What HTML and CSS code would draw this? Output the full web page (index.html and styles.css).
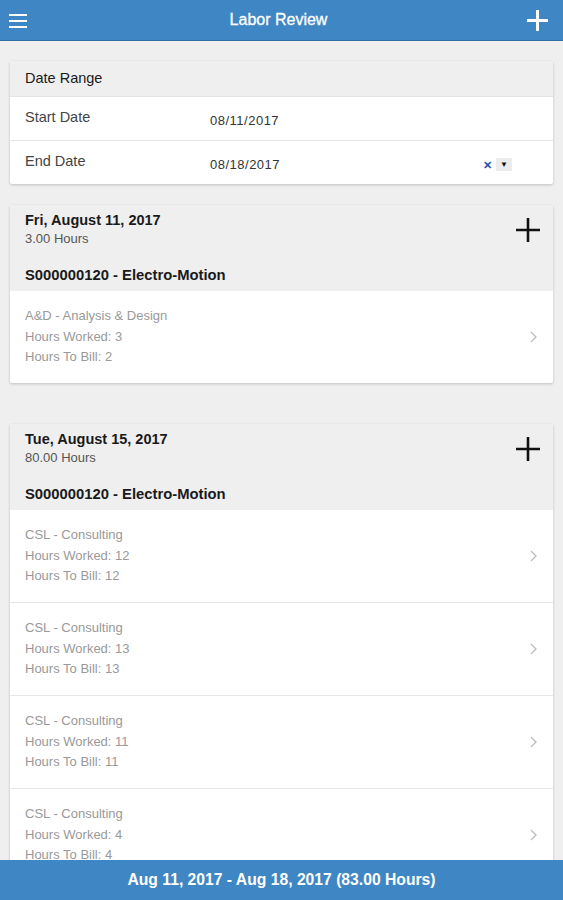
FILE: index.html
```html
<!DOCTYPE html>
<html lang="en">
<head>
    <meta charset="UTF-8">
    <title>Labor Review</title>
    <link rel="stylesheet" href="styles.css">
</head>
<body>
    <header class="topbar">
        <svg class="menu-icon" width="18" height="14" viewBox="0 0 18 14">
            <rect x="0" y="0" width="18" height="2" fill="#fff"/>
            <rect x="0" y="6" width="18" height="2" fill="#fff"/>
            <rect x="0" y="12" width="18" height="2" fill="#fff"/>
        </svg>
        <h1 class="title">Labor Review</h1>
        <svg class="add-icon" width="21" height="21" viewBox="0 0 21 21">
            <path d="M10.5 0v21M0 10.5h21" stroke="#fff" stroke-width="3"/>
        </svg>
    </header>

    <main class="content">
        <section class="card range-card">
            <div class="card-head">Date Range</div>
            <div class="range-row">
                <span class="range-label">Start Date</span>
                <span class="range-value">08/11/2017</span>
            </div>
            <div class="range-row">
                <span class="range-label">End Date</span>
                <span class="range-value">08/18/2017</span>
                <span class="clear-x">&#x2715;</span>
                <span class="drop">&#x25BC;</span>
            </div>
        </section>

        <section class="card day-card">
            <div class="day-head">
                <div class="day-info">
                    <div class="day-date">Fri, August 11, 2017</div>
                    <div class="day-hours">3.00 Hours</div>
                    <div class="day-customer">S000000120 - Electro-Motion</div>
                </div>
                <svg class="day-add" width="24" height="24" viewBox="0 0 24 24">
                    <path d="M12 0v24M0 12h24" stroke="#111" stroke-width="2.6"/>
                </svg>
            </div>
            <div class="entry">
                <div class="entry-text">
                    <div>A&amp;D - Analysis &amp; Design</div>
                    <div>Hours Worked: 3</div>
                    <div>Hours To Bill: 2</div>
                </div>
                <svg class="chevron" width="7" height="12" viewBox="0 0 7 12"><path d="M1 1l5 5-5 5" fill="none" stroke="#bbb" stroke-width="1.3"/></svg>
            </div>
        </section>

        <section class="card day-card">
            <div class="day-head">
                <div class="day-info">
                    <div class="day-date">Tue, August 15, 2017</div>
                    <div class="day-hours">80.00 Hours</div>
                    <div class="day-customer">S000000120 - Electro-Motion</div>
                </div>
                <svg class="day-add" width="24" height="24" viewBox="0 0 24 24">
                    <path d="M12 0v24M0 12h24" stroke="#111" stroke-width="2.6"/>
                </svg>
            </div>
            <div class="entry">
                <div class="entry-text">
                    <div>CSL - Consulting</div>
                    <div>Hours Worked: 12</div>
                    <div>Hours To Bill: 12</div>
                </div>
                <svg class="chevron" width="7" height="12" viewBox="0 0 7 12"><path d="M1 1l5 5-5 5" fill="none" stroke="#bbb" stroke-width="1.3"/></svg>
            </div>
            <div class="entry">
                <div class="entry-text">
                    <div>CSL - Consulting</div>
                    <div>Hours Worked: 13</div>
                    <div>Hours To Bill: 13</div>
                </div>
                <svg class="chevron" width="7" height="12" viewBox="0 0 7 12"><path d="M1 1l5 5-5 5" fill="none" stroke="#bbb" stroke-width="1.3"/></svg>
            </div>
            <div class="entry">
                <div class="entry-text">
                    <div>CSL - Consulting</div>
                    <div>Hours Worked: 11</div>
                    <div>Hours To Bill: 11</div>
                </div>
                <svg class="chevron" width="7" height="12" viewBox="0 0 7 12"><path d="M1 1l5 5-5 5" fill="none" stroke="#bbb" stroke-width="1.3"/></svg>
            </div>
            <div class="entry">
                <div class="entry-text">
                    <div>CSL - Consulting</div>
                    <div>Hours Worked: 4</div>
                    <div>Hours To Bill: 4</div>
                </div>
                <svg class="chevron" width="7" height="12" viewBox="0 0 7 12"><path d="M1 1l5 5-5 5" fill="none" stroke="#bbb" stroke-width="1.3"/></svg>
            </div>
        </section>
    </main>

    <footer class="summary">Aug 11, 2017 - Aug 18, 2017 (83.00 Hours)</footer>
</body>
</html>
```

FILE: styles.css
```css
body {
    margin: 0;
    background-color: #efefef;
    font-family: "Liberation Sans", Arial, sans-serif;
    color: #222;
}
.topbar {
    display: grid;
    grid-template-columns: 1fr auto 1fr;
    align-items: center;
    height: 40px;
    padding: 0 15px 0 9px;
    background-color: #3f87c4;
    border-bottom: 1px solid #2f6fa6;
}
.title {
    margin: 0;
    font-size: 16px;
    font-weight: normal;
    color: #fff;
    -webkit-text-stroke: 0.3px #fff;
}
.menu-icon {
    margin-top: 1px;
}
.add-icon {
    justify-self: end;
}
.content {
    padding: 20px 10px 60px;
}
.card {
    background-color: #fff;
    box-shadow: 0 1px 3px rgba(0, 0, 0, 0.2);
    border-radius: 2px;
    overflow: hidden;
}
.range-card {
    margin-bottom: 21px;
}
.day-card {
    margin-bottom: 41px;
}
.card-head {
    height: 35px;
    line-height: 35px;
    padding: 0 15px;
    background-color: #efefef;
    font-size: 14.5px;
    color: #1a1a1a;
}
.range-row {
    display: flex;
    align-items: center;
    height: 43px;
    padding: 0 15px;
    border-top: 1px solid #e4e4e4;
}
.range-label {
    width: 185px;
    font-size: 14.5px;
    color: #444;
    margin-top: -3px;
}
.range-value {
    flex: 1;
    font-size: 13px;
    letter-spacing: 0.5px;
    color: #333;
    margin-top: 4px;
}
.clear-x {
    font-size: 11px;
    font-weight: bold;
    color: #2757a8;
    margin-top: 5px;
    margin-right: 4px;
}
.drop {
    font-size: 8px;
    background-color: #ececec;
    padding: 2px 4px;
    margin-top: 3px;
    margin-right: 26px;
    color: #111;
}
.day-head {
    display: flex;
    justify-content: space-between;
    padding: 7px 13px 7px 15px;
    background-color: #efefef;
}
.day-date {
    font-size: 14.5px;
    line-height: 16px;
    font-weight: bold;
    color: #1a1a1a;
}
.day-hours {
    font-size: 13px;
    line-height: 16px;
    margin-top: 3px;
    color: #555;
}
.day-customer {
    font-size: 14.8px;
    line-height: 18px;
    margin-top: 19px;
    font-weight: bold;
    color: #1a1a1a;
}
.day-add {
    margin-top: 6px;
}
.entry {
    display: flex;
    align-items: center;
    justify-content: space-between;
    padding: 15px 16px 15.5px 15px;
    border-top: 1px solid #e6e6e6;
}
.day-head + .entry {
    border-top: none;
}
.entry-text {
    font-size: 13px;
    line-height: 20.5px;
    color: #999;
}
.summary {
    position: fixed;
    left: 0;
    right: 0;
    bottom: 0;
    height: 40px;
    line-height: 40px;
    text-align: center;
    background-color: #3f87c4;
    color: #fff;
    font-size: 15.7px;
    font-weight: bold;
}
```
